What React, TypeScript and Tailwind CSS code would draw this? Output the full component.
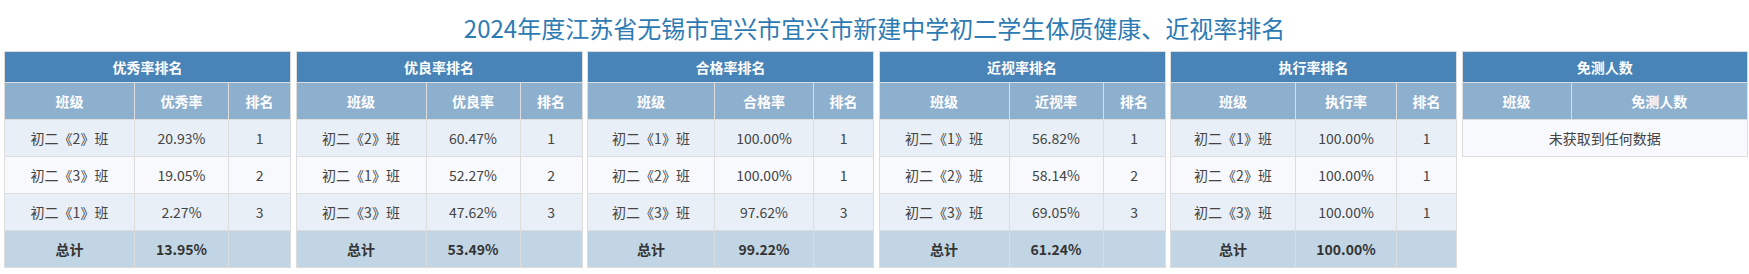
import React from 'react';

type Row = [string, string, string];

interface RankTable {
  title: string;
  rateLabel: string;
  cols: [number, number, number];
  rows: Row[];
  total: string;
}

const tables: RankTable[] = [
  {
    title: '优秀率排名',
    rateLabel: '优秀率',
    cols: [130, 94, 62],
    rows: [
      ['初二《2》班', '20.93%', '1'],
      ['初二《3》班', '19.05%', '2'],
      ['初二《1》班', '2.27%', '3'],
    ],
    total: '13.95%',
  },
  {
    title: '优良率排名',
    rateLabel: '优良率',
    cols: [130, 94, 62],
    rows: [
      ['初二《2》班', '60.47%', '1'],
      ['初二《1》班', '52.27%', '2'],
      ['初二《3》班', '47.62%', '3'],
    ],
    total: '53.49%',
  },
  {
    title: '合格率排名',
    rateLabel: '合格率',
    cols: [127, 99, 60],
    rows: [
      ['初二《1》班', '100.00%', '1'],
      ['初二《2》班', '100.00%', '1'],
      ['初二《3》班', '97.62%', '3'],
    ],
    total: '99.22%',
  },
  {
    title: '近视率排名',
    rateLabel: '近视率',
    cols: [130, 94, 62],
    rows: [
      ['初二《1》班', '56.82%', '1'],
      ['初二《2》班', '58.14%', '2'],
      ['初二《3》班', '69.05%', '3'],
    ],
    total: '61.24%',
  },
  {
    title: '执行率排名',
    rateLabel: '执行率',
    cols: [125, 101, 60],
    rows: [
      ['初二《1》班', '100.00%', '1'],
      ['初二《2》班', '100.00%', '1'],
      ['初二《3》班', '100.00%', '1'],
    ],
    total: '100.00%',
  },
];

const th = 'border border-[#dddddd] text-center font-bold text-white text-[14px]';
const td = 'border border-[#dddddd] text-center text-[14px] h-[37px] p-0';

const RankCard: React.FC<{ t: RankTable }> = ({ t }) => (
  <table className="w-full table-fixed border-collapse">
    <colgroup>
      {t.cols.map((w, i) => (
        <col key={i} style={{ width: w }} />
      ))}
    </colgroup>
    <thead>
      <tr>
        <th colSpan={3} className={`${th} h-[31px] bg-[#4884b7]`}>
          {t.title}
        </th>
      </tr>
      <tr className="bg-[#8eb0cf]">
        <th className={`${th} h-[37px]`}>班级</th>
        <th className={`${th} h-[37px]`}>{t.rateLabel}</th>
        <th className={`${th} h-[37px]`}>排名</th>
      </tr>
    </thead>
    <tbody className="text-[#444444]">
      {t.rows.map((r, i) => (
        <tr key={i} className={i % 2 === 0 ? 'bg-[#e8eff7]' : 'bg-[#f7f9fd]'}>
          <td className={td}>{r[0]}</td>
          <td className={td}>{r[1]}</td>
          <td className={td}>{r[2]}</td>
        </tr>
      ))}
      <tr className="bg-[#c2d5e4] text-[#333333] font-bold">
        <td className={td}>总计</td>
        <td className={td}>{t.total}</td>
        <td className={td}></td>
      </tr>
    </tbody>
  </table>
);

const ExemptCard: React.FC = () => (
  <table className="w-full table-fixed border-collapse">
    <colgroup>
      <col style={{ width: 109 }} />
      <col />
    </colgroup>
    <thead>
      <tr>
        <th colSpan={2} className={`${th} h-[31px] bg-[#4884b7]`}>
          免测人数
        </th>
      </tr>
      <tr className="bg-[#8eb0cf]">
        <th className={`${th} h-[37px]`}>班级</th>
        <th className={`${th} h-[37px]`}>免测人数</th>
      </tr>
    </thead>
    <tbody className="text-[#444444]">
      <tr className="bg-[#f7f9fd]">
        <td colSpan={2} className={td}>
          未获取到任何数据
        </td>
      </tr>
    </tbody>
  </table>
);

export default function App() {
  return (
    <div
      className="w-[1749px] h-[274px] bg-white"
      style={{ fontFamily: '"Noto Sans CJK SC", "Noto Sans", sans-serif' }}
    >
      <div className="h-[51px] pt-[4px] flex items-center justify-center">
        <h1 className="text-[24px] leading-none font-normal text-[#2e7bb4]">
          2024年度江苏省无锡市宜兴市宜兴市新建中学初二学生体质健康、近视率排名
        </h1>
      </div>
      <div className="grid grid-cols-6">
        {tables.map((t) => (
          <div key={t.title} className="pl-[4px] pr-[1px]">
            <RankCard t={t} />
          </div>
        ))}
        <div className="pl-[4px] pr-[1px]">
          <ExemptCard />
        </div>
      </div>
    </div>
  );
}
